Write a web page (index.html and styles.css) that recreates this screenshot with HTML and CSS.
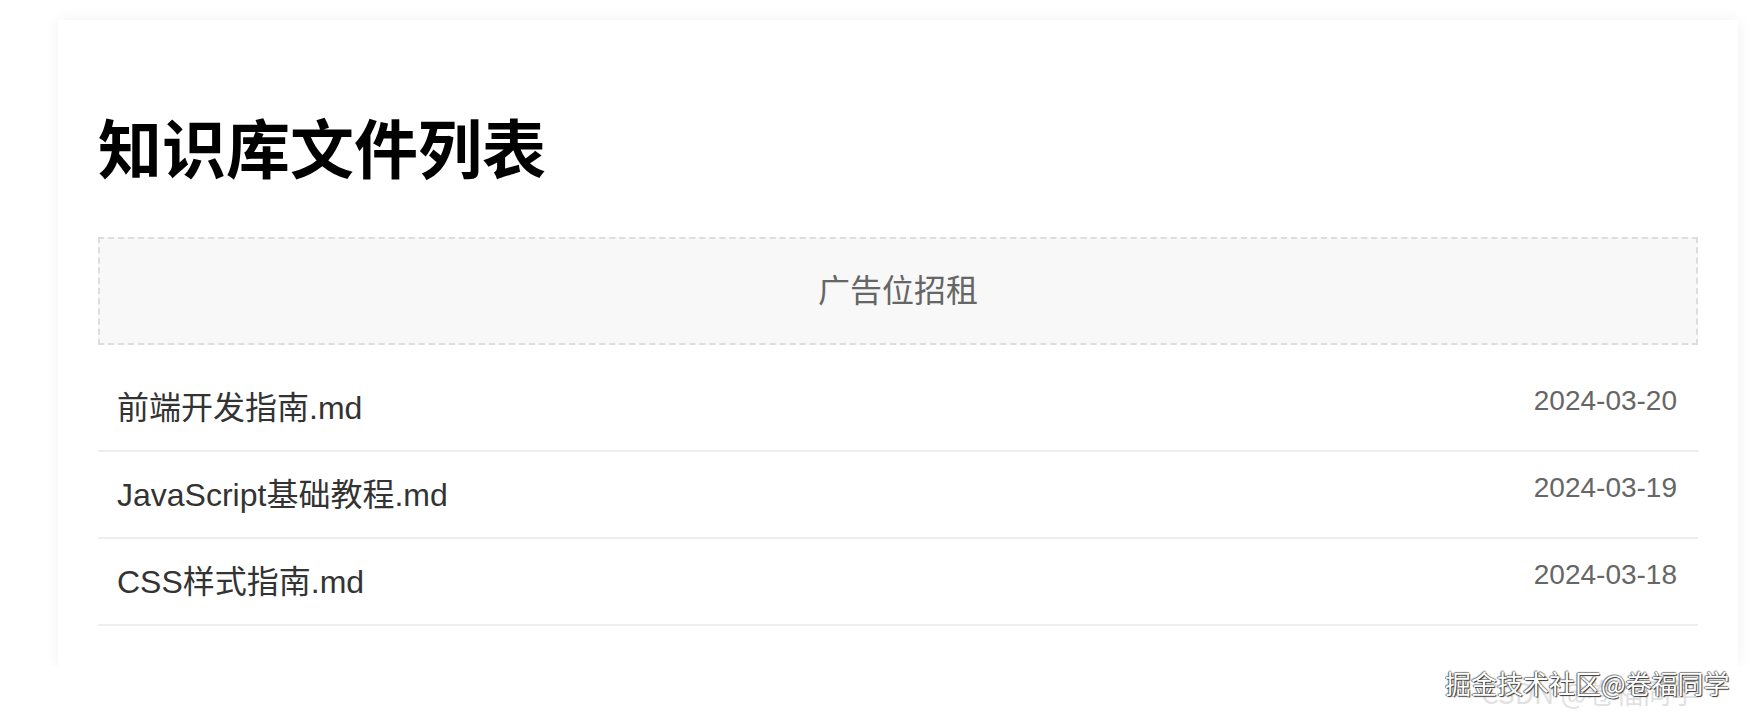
FILE: index.html
```html
<!DOCTYPE html>
<html lang="zh-CN">
<head>
  <meta charset="UTF-8" />
  <title>知识库文件列表</title>
  <meta name="viewport" content="width=device-width, initial-scale=1.0" />
  <link rel="stylesheet" href="styles.css">
</head>
<body>
  <div class="container">
    <h1 class="header">知识库文件列表</h1>

    <div class="ad-slot">广告位招租</div>

    <ul class="file-list">
      <li class="file-item">
        <span class="file-name">前端开发指南.md</span>
        <span class="file-date">2024-03-20</span>
      </li>
      <li class="file-item">
        <span class="file-name">JavaScript基础教程.md</span>
        <span class="file-date">2024-03-19</span>
      </li>
      <li class="file-item">
        <span class="file-name">CSS样式指南.md</span>
        <span class="file-date">2024-03-18</span>
      </li>
    </ul>
  </div>

  <div class="watermark">
    <span class="ghost">CSDN @卷福同学</span>
    <span class="mark">掘金技术社区@卷福同学</span>
  </div>
</body>
</html>
```

FILE: styles.css
```css
body {
  background: #fff;
  color: #333;
  font-family: 'Liberation Sans', 'Noto Sans CJK SC', sans-serif;
  margin: 0;
  padding: 20px 0 0 58px;
}

.container {
  width: 1600px;
  padding: 40px;
  background-color: white;
  box-shadow: 0 0 14px rgba(0,0,0,0.06);
}

.header {
  font-family: 'Noto Sans CJK SC', sans-serif;
  font-size: 64px;
  font-weight: bold;
  color: #000;
  line-height: 92px;
  margin: 39px 0 46px;
}

.ad-slot {
  font-family: 'Noto Sans CJK SC', sans-serif;
  font-size: 32px;
  line-height: 46px;
  color: #666;
  text-align: center;
  padding: 26px 0 32px;
  background: #f8f8f8;
  border: 2px dashed #ddd;
}

.file-list {
  list-style: none;
  margin: 20px 0 0;
  padding: 0;
}

.file-item {
  display: flex;
  justify-content: space-between;
  align-items: flex-start;
  padding: 20px 21px 19px 19px;
  border-bottom: 2px solid #eee;
}

.file-name {
  font-size: 32px;
  line-height: 46px;
  color: #333;
}

.file-date {
  font-size: 28px;
  line-height: 32px;
  color: #666;
}

.watermark {
  position: absolute;
  left: 1445px;
  top: 664px;
  width: 305px;
  height: 50px;
  overflow: hidden;
  font-family: 'Noto Sans CJK SC', sans-serif;
}

.watermark .ghost {
  position: absolute;
  left: 36px;
  top: 8px;
  font-size: 28px;
  white-space: nowrap;
  color: rgba(200,200,200,0.55);
}

.watermark .mark {
  position: absolute;
  left: 0;
  top: 0;
  font-size: 26px;
  white-space: nowrap;
  color: #fff;
  text-shadow: 1px 1px 1px #333, -1px 0 1px #666, 0 -1px 1px #888;
}
```
